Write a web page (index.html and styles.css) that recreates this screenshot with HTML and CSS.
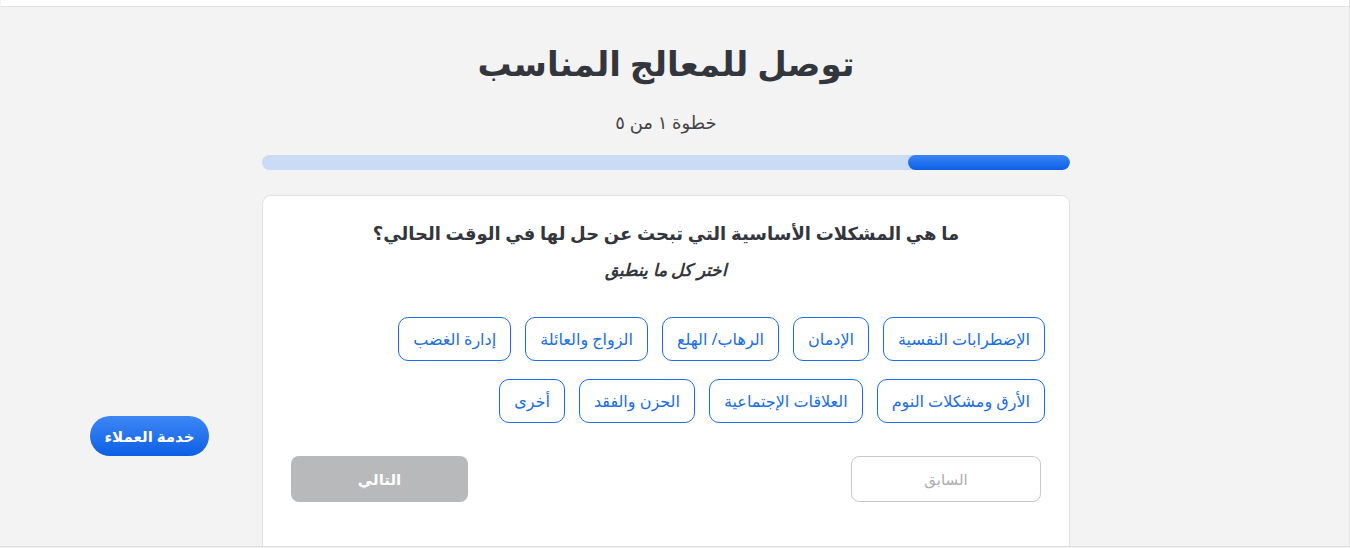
FILE: index.html
```html
<!DOCTYPE html>
<html lang="ar" dir="rtl">
<head>
<meta charset="utf-8">
<title>توصل للمعالج المناسب</title>
<link rel="stylesheet" href="styles.css">
</head>
<body>
<div class="topbar"></div>
<main class="page">
  <h1 class="title">توصل للمعالج المناسب</h1>
  <p class="step">خطوة ١ من ٥</p>
  <div class="progress"><div class="progress-fill" style="width:20%"></div></div>
  <section class="card">
    <h2 class="question">ما هي المشكلات الأساسية التي تبحث عن حل لها في الوقت الحالي؟</h2>
    <p class="hint">اختر كل ما ينطبق</p>
    <div class="options">
      <button class="opt">الإضطرابات النفسية</button>
      <button class="opt">الإدمان</button>
      <button class="opt">الرهاب/ الهلع</button>
      <button class="opt">الزواج والعائلة</button>
      <button class="opt">إدارة الغضب</button>
    </div>
    <div class="options">
      <button class="opt">الأرق ومشكلات النوم</button>
      <button class="opt">العلاقات الإجتماعية</button>
      <button class="opt">الحزن والفقد</button>
      <button class="opt">أخرى</button>
    </div>
    <div class="nav">
      <button class="btn-prev">السابق</button>
      <button class="btn-next">التالي</button>
    </div>
  </section>
</main>
<button class="support">خدمة العملاء</button>
</body>
</html>
```
FILE: styles.css
```css
* { box-sizing: border-box; }
html, body { margin: 0; padding: 0; }
body {
  background: #f3f3f3;
  font-family: "Noto Sans", "DejaVu Sans", sans-serif;
  color: #33373d;
  height: 548px;
  overflow: hidden;
  border-right: 1px solid #e2e2e2;
  width: 1349px;
}
.topbar {
  height: 7px;
  background: #fff;
  border-bottom: 1px solid #e2e2e2;
}
.page {
  display: flex;
  flex-direction: column;
  align-items: center;
  width: 1332px;
  margin-left: 0;
  margin-right: 17px;
  height: 539px;
  overflow: hidden;
}
.title {
  margin: 33px 0 0;
  font-size: 34px;
  line-height: 46px;
  font-weight: 700;
  color: #33373d;
}
.step {
  margin: 24px 0 0;
  font-size: 18px;
  line-height: 24px;
  color: #444;
}
.progress {
  margin-top: 21px;
  width: 808px;
  height: 15px;
  border-radius: 8px;
  background: #cadbf5;
  overflow: hidden;
}
.progress-fill {
  height: 100%;
  border-radius: 8px;
  background: linear-gradient(#3a85f5, #0c5fe6);
}
.card {
  margin-top: 25px;
  width: 808px;
  flex: 1;
  background: #fff;
  border: 1px solid #e0e0e0;
  border-bottom: none;
  border-radius: 9px 9px 0 0;
  padding: 22px 24px 0;
}
.question {
  margin: 0;
  text-align: center;
  font-size: 18px;
  line-height: 30px;
  font-weight: 700;
  color: #33373d;
}
.hint {
  margin: 9px 0 0;
  text-align: center;
  font-size: 17px;
  line-height: 26px;
  font-weight: 700;
  font-style: italic;
  color: #33373d;
}
.options {
  display: flex;
  gap: 14px;
  margin-top: 18px;
}
.options:first-of-type { margin-top: 34px; }
.opt {
  height: 44px;
  padding: 0 14px;
  background: #fff;
  border: 1px solid #1a6ee6;
  border-radius: 10px;
  color: #1a6ee6;
  font-family: inherit;
  font-size: 16px;
}
.nav {
  display: flex;
  justify-content: space-between;
  padding: 0 4px;
  margin-top: 33px;
}
.btn-prev {
  width: 190px;
  height: 46px;
  background: #fff;
  border: 1px solid #c9c9c9;
  border-radius: 8px;
  color: #adadad;
  font-family: inherit;
  font-size: 15px;
}
.btn-next {
  width: 177px;
  height: 46px;
  background: #b8b9ba;
  border: none;
  border-radius: 8px;
  color: #fff;
  font-family: inherit;
  font-size: 15px;
  font-weight: 700;
}
.support {
  position: absolute;
  left: 90px;
  top: 416px;
  width: 119px;
  height: 40px;
  border: none;
  border-radius: 20px;
  background: linear-gradient(#3d87f6, #0d5fe5);
  color: #fff;
  font-family: inherit;
  font-size: 15px;
  font-weight: 700;
}
body::after {
  content: "";
  position: absolute;
  left: 0;
  top: 546px;
  width: 1349px;
  border-top: 1px solid #dedede;
}
```
